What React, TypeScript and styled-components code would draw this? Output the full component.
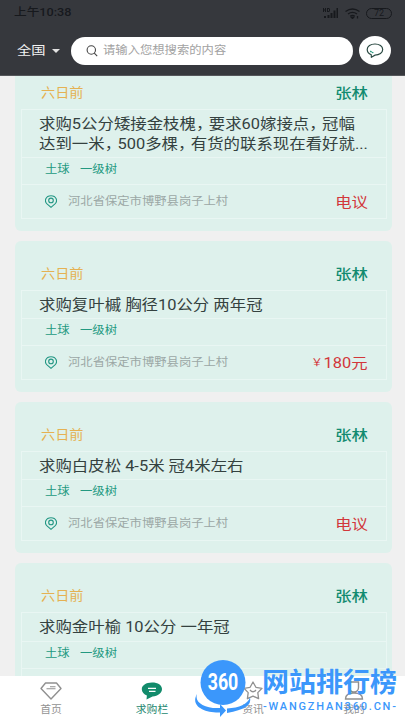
import React from "react";
import styled, { createGlobalStyle } from "styled-components";

const GlobalStyle = createGlobalStyle`
  * { box-sizing: border-box; }
  html, body { margin: 0; padding: 0; background: #f0f0f0; overflow: hidden; }
  body { font-family: Roboto, "Noto Sans CJK SC", sans-serif; }
`;

const Screen = styled.div`
  position: relative;
  width: 405px;
  height: 720px;
  display: flex;
  flex-direction: column;
  overflow: hidden;
  background: #f0f0f0;
`;

/* Single-line label with a horizontally widened face. */
const Label = styled.span<{
  $size: number;
  $color: string;
  $stretch?: number;
  $weight?: number;
  $origin?: string;
}>`
  display: block;
  flex: none;
  white-space: pre;
  line-height: 20px;
  font-size: ${(p) => p.$size}px;
  color: ${(p) => p.$color};
  font-weight: ${(p) => p.$weight ?? 400};
  transform: scaleX(${(p) => p.$stretch ?? 1.12});
  transform-origin: ${(p) => p.$origin ?? "left"} center;
`;

const Comma = styled.span`
  letter-spacing: -3.2px;
`;

const Header = styled.header`
  flex: none;
  height: 76px;
  background: #36383d;
  border-bottom: 1px solid #55575b;
`;

const StatusBar = styled.div`
  display: flex;
  justify-content: space-between;
  align-items: center;
  height: 26px;
  padding: 0 13px 0 14px;
`;

const StatusIcons = styled.div`
  display: flex;
  align-items: center;
  gap: 6px;
`;

const Battery = styled.div`
  width: 26px;
  height: 11px;
  border: 1px solid #17191d;
  border-radius: 6px;
  color: #17191d;
  font-size: 9px;
  line-height: 9px;
  text-align: center;
`;

const SearchRow = styled.div`
  display: flex;
  align-items: center;
  height: 49px;
  padding: 0 13px 0 17px;
`;

const Region = styled.div`
  width: 54px;
  display: flex;
  align-items: center;
  justify-content: space-between;
  padding-right: 11px;
`;

const Caret = styled.i`
  flex: none;
  border: 4px solid transparent;
  border-top-color: #e3e3e3;
  border-bottom: 0;
`;

const SearchBox = styled.div`
  width: 282px;
  height: 28px;
  margin-right: 6px;
  padding-left: 15px;
  display: flex;
  align-items: center;
  gap: 5px;
  border-radius: 14px;
  background: #fff;
`;

const ChatButton = styled.button`
  width: 32px;
  height: 29px;
  padding: 0;
  border: 0;
  border-radius: 50%;
  background: #fff;
  display: grid;
  place-items: center;
`;

const Feed = styled.main`
  flex: 1;
  min-height: 0;
  overflow: hidden;
  display: flex;
  flex-direction: column;
  gap: 9.7px;
  padding: 0 13px 0 15px;
`;

const Card = styled.article<{ $clipped?: boolean }>`
  flex: none;
  padding: 0 5px 12px 6px;
  margin-top: ${(p) => (p.$clipped ? -16 : 0)}px;
  border-radius: 6px;
  background: #def1ec;
`;

const CardHead = styled.div`
  height: 49px;
  display: flex;
  justify-content: space-between;
  padding: 23px 19px 0 20px;
`;

const Details = styled.div`
  border: 1px solid #e9f6f3;
`;

const Titles = styled.div`
  padding: 5px 0 3px 17px;
  border-bottom: 1px solid #e9f6f3;
`;

const TitleLine = styled.div`
  height: 19.5px;
`;

const Tags = styled.div`
  height: 27px;
  display: flex;
  gap: 13px;
  padding: 2px 0 0 23px;
  border-bottom: 1px solid #e9f6f3;
`;

const Foot = styled.div`
  height: 33px;
  display: flex;
  align-items: center;
  padding: 0 18px 0 23px;
`;

const Place = styled.div`
  flex: 1;
  display: flex;
  align-items: center;
  gap: 11px;
`;

const Price = styled.div`
  display: flex;
  align-items: center;
  gap: 9px;
`;

const Nav = styled.nav`
  flex: none;
  height: 44px;
  display: grid;
  grid-template-columns: repeat(4, 1fr);
  background: #fff;
`;

const NavItem = styled.div`
  display: flex;
  flex-direction: column;
  align-items: center;
  padding-top: 5px;
`;

const IconSlot = styled.div`
  height: 19px;
  display: grid;
  place-items: center;
`;

const Watermark = styled.div`
  position: absolute;
  left: 193px;
  top: 659px;
  display: flex;
  color: #3b97fb;
`;

const Emblem = styled.div`
  position: relative;
  width: 69px;
  height: 61px;
`;

const EmblemText = styled.span`
  position: absolute;
  left: 8px;
  top: 11px;
  width: 44px;
  color: #fff;
  font: 700 24px/24px Roboto, sans-serif;
  text-align: center;
  transform: scaleX(0.74);
`;

const Wordmark = styled.div`
  display: flex;
  flex-direction: column;
`;

const WordmarkName = styled.span`
  font: 700 27px/34px "Noto Sans CJK SC", sans-serif;
  padding-top: 5px;
  white-space: nowrap;
`;

const WordmarkUrl = styled.span`
  font: 500 11px/13px Roboto, sans-serif;
  letter-spacing: 1.8px;
  padding-top: 2px;
  margin-left: 1px;
  white-space: nowrap;
`;

interface Post {
  id: number;
  lines: string[];
  price?: string;
}

const posts: Post[] = [
  {
    id: 1,
    lines: [
      "求购5公分矮接金枝槐，要求60嫁接点，冠幅",
      "达到一米，500多棵，有货的联系现在看好就...",
    ],
  },
  { id: 2, lines: ["求购复叶槭 胸径10公分 两年冠"], price: "180元" },
  { id: 3, lines: ["求购白皮松 4-5米 冠4米左右"] },
  { id: 4, lines: ["求购金叶榆 10公分 一年冠"] },
];

const PinIcon = () => (
  <svg width="12" height="13" viewBox="0 0 12 13" fill="none" stroke="#239784" strokeWidth="1.1">
    <path d="M6 12.3 2 8.9C-.9 6.3.5.7 6 .7s6.9 5.6 4 8.2Z" />
    <circle cx="6" cy="5.4" r="2.3" />
  </svg>
);

const PostCard = ({ post }: { post: Post }) => (
  <Card $clipped={post.id === 1}>
    <CardHead>
      <Label $size={13} $color="#e5b152" $stretch={1.09}>六日前</Label>
      <Label $size={14} $color="#128b70" $weight={500} $stretch={1.17} $origin="right">张林</Label>
    </CardHead>
    <Details>
      <Titles>
        {post.lines.map((line) => (
          <TitleLine key={line}>
            <Label $size={14.5} $color="#34413f" $stretch={1.132}>
              {line.split("，").map((part, i) => (
                <React.Fragment key={part}>
                  {i > 0 && <Comma>，</Comma>}
                  {part}
                </React.Fragment>
              ))}
            </Label>
          </TitleLine>
        ))}
      </Titles>
      <Tags>
        <Label $size={11} $color="#239981">土球</Label>
        <Label $size={11} $color="#239981">一级树</Label>
      </Tags>
      <Foot>
        <Place>
          <PinIcon />
          <Label $size={11} $color="#9ba7a5">河北省保定市博野县岗子上村</Label>
        </Place>
        <Price>
          {post.price && <Label $size={10.5} $color="#d2373b">￥</Label>}
          <Label $size={14} $color="#d2373b" $stretch={1.17} $origin="right">{post.price ?? "电议"}</Label>
        </Price>
      </Foot>
    </Details>
  </Card>
);

const GemIcon = () => (
  <svg width="22" height="18" viewBox="0 0 22 18" fill="none" stroke="#909090" strokeWidth="1.4" strokeLinejoin="round">
    <path d="M5.5 1h11L21 6.5 11 17 1 6.5Z" />
    <path d="M6.500 6.800h9M10 4.800h5.500" strokeWidth="1.100" />
  </svg>
);

const BubbleIcon = () => (
  <svg width="22" height="18" viewBox="0 0 22 18">
    <path fill="#128b6b" d="M11 .5C17 .5 21 3.200 21 7s-4 7.200-9.500 7.500L5.500 17.500l.4-4C3 12.300.8 10.300.8 7.300.8 3.300 5 .5 11 .5Z" />
    <path stroke="#fff" strokeWidth="1.2" d="M7 6.300h8M8 9.300h6.500" />
  </svg>
);

const StarIcon = () => (
  <svg width="20" height="19" viewBox="0 0 20 19" fill="none" stroke="#909090" strokeWidth="1.3" strokeLinejoin="round">
    <path d="m10 1 2.900 5.300 6.100 1-4.200 4.300.8 6.100L10 15.100l-5.600 2.600.8-6.100L1 7.300l6.100-1ZM7 9q3 3.500 6 0" />
  </svg>
);

const UserIcon = () => (
  <svg width="20" height="19" viewBox="0 0 20 19" fill="none" stroke="#909090" strokeWidth="1.4">
    <path d="M5.500 1h9v5.500a4.500 4.500 0 0 1-9 0ZM1.500 18c0-4 3.500-6 8.500-6s8.500 2 8.500 6Z" />
  </svg>
);

const tabs = [
  { label: "首页", Icon: GemIcon, active: false },
  { label: "求购栏", Icon: BubbleIcon, active: true },
  { label: "资讯", Icon: StarIcon, active: false },
  { label: "我的", Icon: UserIcon, active: false },
];

export default function App() {
  return (
    <Screen>
      <GlobalStyle />
      <Header>
        <StatusBar>
          <Label $size={11} $color="#17191d" $weight={500} $stretch={1.15}>上午10:38</Label>
          <StatusIcons>
            <svg width="16" height="12" viewBox="0 0 16 12" fill="#17191d">
              <path d="M1 9h2v2H1zM4.500 8h2v3h-2zM7.500 6h2v5h-2zM10.500 3.500h2V11h-2zM13.500 1H15v10h-1.500z" />
              <path d="M0 1h1v1.500h1V1h1v4H2V3.500H1V5H0zM4 1h2l1 1v2L6 5H4zM5 2v2h1V2z" />
            </svg>
            <svg width="15" height="11" viewBox="0 0 15 11" fill="none" stroke="#17191d" strokeWidth="1.300">
              <path d="M.5 3.500q7-5 14 0M3 6q4.500-3.200 9 0M5.200 8.300q2.300-1.600 4.600 0" />
              <path d="m6.500 9.500 1 1 1-1ZM12.500 8v2.500" />
            </svg>
            <Battery>72</Battery>
          </StatusIcons>
        </StatusBar>
        <SearchRow>
          <Region>
            <Label $size={12.5} $color="#f2f2f2" $stretch={1.14}>全国</Label>
            <Caret />
          </Region>
          <SearchBox>
            <svg width="12" height="12" viewBox="0 0 12 12" fill="none" stroke="#444" strokeWidth="1.100">
              <circle cx="5.300" cy="5" r="4.200" />
              <path d="m8.300 8.200 2.900 3" />
            </svg>
            <Label $size={11} $color="#a2a2a2">请输入您想搜索的内容</Label>
          </SearchBox>
          <ChatButton aria-label="消息">
            <svg width="18" height="15" viewBox="0 0 18 15" fill="none" stroke="#2b4a43" strokeWidth="1.200">
              <path d="M5.200 11.700C2.500 10.700 1.200 8.800 1.200 6.600 1.200 3.400 4.600 1 9 1s7.700 2.400 7.700 5.600-3.300 5.600-7.700 5.600L5.400 14.200Z" />
              <path d="m4.300 8 1.300 1.200M6.200 9.300l1.100.6" stroke="#159276" />
            </svg>
          </ChatButton>
        </SearchRow>
      </Header>
      <Feed>
        {posts.map((post) => (
          <PostCard key={post.id} post={post} />
        ))}
      </Feed>
      <Nav>
        {tabs.map(({ label, Icon, active }) => (
          <NavItem key={label}>
            <IconSlot><Icon /></IconSlot>
            <Label $size={10} $color={active ? "#25886f" : "#929292"} $stretch={1.08} $origin="center">{label}</Label>
          </NavItem>
        ))}
      </Nav>
      <Watermark>
        <Emblem>
          <svg width="61" height="61" viewBox="0 0 61 61" fill="#3b97fb">
            <circle cx="30" cy="23.500" r="22.500" />
            <path d="M4 35C-3 47 11 54 27 53.500v4.500l6-6.500-6-6.500v4C13 50 1 44 4 35Z" />
            <path d="M34 49.500q19-1 23-11 3 11-23 15.500Z" />
          </svg>
          <EmblemText>360</EmblemText>
        </Emblem>
        <Wordmark>
          <WordmarkName>网站排行榜</WordmarkName>
          <WordmarkUrl>-WANGZHAN360.CN-</WordmarkUrl>
        </Wordmark>
      </Watermark>
    </Screen>
  );
}
